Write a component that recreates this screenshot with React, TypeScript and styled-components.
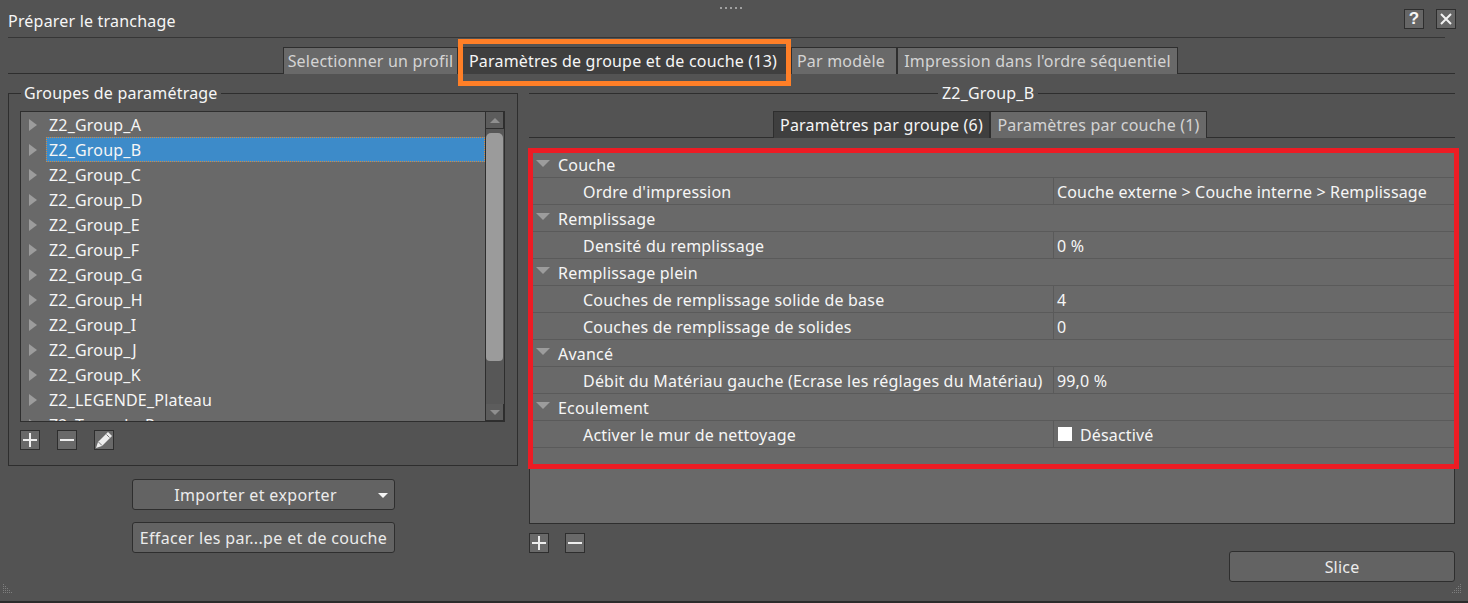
import type { FC } from 'react';
import styled, { createGlobalStyle } from 'styled-components';

const groups = [
	'Z2_Group_A',
	'Z2_Group_B',
	'Z2_Group_C',
	'Z2_Group_D',
	'Z2_Group_E',
	'Z2_Group_F',
	'Z2_Group_G',
	'Z2_Group_H',
	'Z2_Group_I',
	'Z2_Group_J',
	'Z2_Group_K',
	'Z2_LEGENDE_Plateau',
	'Z2_Tremple_P',
];

type Setting = { label: string; value?: string; checkbox?: boolean };

const settings: Setting[] = [
	{ label: 'Couche' },
	{ label: "Ordre d'impression", value: 'Couche externe > Couche interne > Remplissage' },
	{ label: 'Remplissage' },
	{ label: 'Densité du remplissage', value: '0 %' },
	{ label: 'Remplissage plein' },
	{ label: 'Couches de remplissage solide de base', value: '4' },
	{ label: 'Couches de remplissage de solides', value: '0' },
	{ label: 'Avancé' },
	{ label: 'Débit du Matériau gauche (Ecrase les réglages du Matériau)', value: '99,0 %' },
	{ label: 'Ecoulement' },
	{ label: 'Activer le mur de nettoyage', value: 'Désactivé', checkbox: true },
];

const PlusIcon: FC = () => (
	<svg width="14" height="14" viewBox="0 0 14 14">
		<path d="M0 7H14M7 0V14" stroke="#eee" strokeWidth="2" />
	</svg>
);

const MinusIcon: FC = () => (
	<svg width="14" height="14" viewBox="0 0 14 14">
		<path d="M0 7H14" stroke="#eee" strokeWidth="2" />
	</svg>
);

const PencilIcon: FC = () => (
	<svg width="18" height="18" viewBox="0 0 18 18">
		<path d="M13 1 17 5 7 15 1 17 3 11Z" fill="#eee" />
		<path d="M11.5 3.5 14.5 6.5" stroke="#777" strokeWidth="1" />
		<path d="M3.5 11 7 14.5" stroke="#777" strokeWidth="1" />
	</svg>
);

const CloseIcon: FC = () => (
	<svg width="14" height="14" viewBox="0 0 14 14">
		<path d="M2 2 12 12M12 2 2 12" stroke="#f2f2f2" strokeWidth="2" />
	</svg>
);

const HandleDots: FC = () => (
	<HandleBox width="22" height="2" viewBox="0 0 22 2">
		<path d="M0 0h2v2H0zM5 0h2v2H5zM10 0h2v2h-2zM15 0h2v2h-2zM20 0h2v2h-2z" fill="#a0a0a0" />
	</HandleBox>
);

const Grip: FC<{ flip?: boolean }> = ({ flip }) => (
	<GripBox width="12" height="12" viewBox="0 0 12 12" $flip={flip}>
		<path
			d="M10 1h1v1h-1zM8 3h1v1H8zM10 3h1v1h-1zM6 5h1v1H6zM8 5h1v1H8zM10 5h1v1h-1zM4 7h1v1H4zM6 7h1v1H6zM8 7h1v1H8zM10 7h1v1h-1zM2 9h1v1H2zM4 9h1v1H4zM6 9h1v1H6zM8 9h1v1H8zM10 9h1v1h-1z"
			fill="#7e7e7e"
		/>
	</GripBox>
);

const App: FC = () => {
	return (
		<Window>
			<GlobalStyle />
			<HandleDots />
			<TitleBar>
				<Title>Préparer le tranchage</Title>
				<TitleButtons>
					<TitleButton>?</TitleButton>
					<TitleButton>
						<CloseIcon />
					</TitleButton>
				</TitleButtons>
			</TitleBar>
			<TabBar>
				<Tab $w={175}>Selectionner un profil</Tab>
				<Tab $w={333} $pr={3} $active>
					Paramètres de groupe et de couche (13)
					<OrangeMark />
				</Tab>
				<Tab $w={106} $pr={6}>
					Par modèle
				</Tab>
				<Tab $w={281}>Impression dans l'ordre séquentiel</Tab>
			</TabBar>
			<Main>
				<LeftColumn>
					<GroupBox>
						<Legend>Groupes de paramétrage</Legend>
						<Tree>
							<TreeList>
								{groups.map((name) => (
									<TreeRow key={name}>
										<TreeArrow />
										<TreeLabel $selected={name === 'Z2_Group_B'}>{name}</TreeLabel>
									</TreeRow>
								))}
							</TreeList>
							<ScrollBar>
								<ScrollButton>
									<ArrowUp />
								</ScrollButton>
								<ScrollTrack>
									<ScrollThumb />
								</ScrollTrack>
								<ScrollButton>
									<ArrowDown />
								</ScrollButton>
							</ScrollBar>
						</Tree>
						<IconRow>
							<IconButton>
								<PlusIcon />
							</IconButton>
							<IconButton>
								<MinusIcon />
							</IconButton>
							<IconButton>
								<PencilIcon />
							</IconButton>
						</IconRow>
					</GroupBox>
					<ActionButton $menu>
						Importer et exporter
						<MenuArrow />
					</ActionButton>
					<ActionButton>Effacer les par...pe et de couche</ActionButton>
				</LeftColumn>
				<RightColumn>
					<GroupHeading>
						<HeadingLine $w={409} />
						<span>Z2_Group_B</span>
						<HeadingLine />
					</GroupHeading>
					<SubTabBar>
						<Tab $w={217} $active>
							Paramètres par groupe (6)
						</Tab>
						<Tab $w={217}>Paramètres par couche (1)</Tab>
					</SubTabBar>
					<Panel>
						{settings.map((item) =>
							item.value === undefined ? (
								<SectionRow key={item.label}>
									<SectionArrow />
									{item.label}
								</SectionRow>
							) : (
								<SettingRow key={item.label}>
									<SettingLabel>{item.label}</SettingLabel>
									<SettingValue>
										{item.checkbox && <CheckBox />}
										{item.value}
									</SettingValue>
								</SettingRow>
							),
						)}
						<RedMark />
					</Panel>
					<Footer>
						<FooterIcons>
							<IconButton>
								<PlusIcon />
							</IconButton>
							<IconButton>
								<MinusIcon />
							</IconButton>
						</FooterIcons>
						<SliceButton>Slice</SliceButton>
					</Footer>
				</RightColumn>
			</Main>
			<Grip flip />
			<Grip />
		</Window>
	);
};

export default App;

const GlobalStyle = createGlobalStyle`
	html, body {
		margin: 0;
		padding: 0;
		background: #535353;
		overflow: hidden;
	}
`;

const Window = styled.div`
	position: relative;
	box-sizing: border-box;
	display: flex;
	flex-direction: column;
	width: 1468px;
	height: 603px;
	overflow: hidden;
	background: #535353;
	border-bottom: 2px solid #2b2b2b;
	color: #f6f6f6;
	font-family: 'Noto Sans', 'Open Sans', sans-serif;
	font-size: 16px;
	letter-spacing: 0.2px;
	white-space: nowrap;
`;

const HandleBox = styled.svg`
	position: absolute;
	top: 7px;
	left: 720px;
`;

const TitleBar = styled.div`
	box-sizing: border-box;
	display: flex;
	justify-content: space-between;
	align-items: flex-start;
	height: 38px;
	margin-left: 8px;
	margin-right: 23px;
	padding-top: 9px;
	border-bottom: 1px solid #363636;
`;

const Title = styled.div`
	line-height: 24px;
`;

const TitleButtons = styled.div`
	display: flex;
	gap: 12px;
	margin-right: -11px;
`;

const TitleButton = styled.div`
	box-sizing: border-box;
	display: flex;
	align-items: center;
	justify-content: center;
	width: 20px;
	height: 20px;
	background: #666;
	border: 1px solid #2e2e2e;
	font-family: 'Liberation Sans', sans-serif;
	font-size: 17px;
	font-weight: 700;
`;

const TabBar = styled.div`
	box-sizing: border-box;
	display: flex;
	justify-content: center;
	height: 27px;
	margin: 9px 13px 0 8px;
	padding-right: 2px;
	border-bottom: 1px solid #2e2e2e;
`;

const Tab = styled.div<{ $w: number; $pr?: number; $active?: boolean }>`
	position: relative;
	box-sizing: border-box;
	display: flex;
	align-items: center;
	justify-content: center;
	width: ${({ $w }) => $w}px;
	height: 27px;
	padding-right: ${({ $pr }) => $pr ?? 0}px;
	background: ${({ $active }) => ($active ? '#3f3f3f' : '#696969')};
	border: 1px solid #2e2e2e;
	border-bottom: none;
	color: ${({ $active }) => ($active ? '#f6f6f6' : '#d4d4d4')};
	line-height: 24px;
`;

const OrangeMark = styled.div`
	position: absolute;
	top: -9px;
	left: -1px;
	right: -1px;
	bottom: -12px;
	border: 5px solid #ff7f27;
	box-sizing: border-box;
`;

const Main = styled.div`
	display: flex;
	gap: 11px;
	margin: 9px 13px 0 8px;
`;

const LeftColumn = styled.div`
	display: flex;
	flex-direction: column;
	align-items: center;
	width: 510px;
	flex: none;
`;

const GroupBox = styled.div`
	position: relative;
	box-sizing: border-box;
	width: 510px;
	height: 373px;
	margin-top: 10px;
	margin-bottom: 13px;
	padding: 17px 12px 0 11px;
	border: 1px solid #2e2e2e;
`;

const Legend = styled.div`
	position: absolute;
	top: -13px;
	left: 12px;
	padding: 0 3px;
	background: #535353;
	line-height: 24px;
`;

const Tree = styled.div`
	box-sizing: border-box;
	display: flex;
	height: 311px;
	background: #696969;
	border: 1px solid #2e2e2e;
	overflow: hidden;
`;

const TreeList = styled.div`
	flex: 1;
	min-width: 0;
`;

const TreeRow = styled.div`
	display: flex;
	align-items: center;
	height: 25px;
	padding-left: 8px;
`;

const TreeArrow = styled.div`
	width: 0;
	height: 0;
	border-left: 8px solid #9c9c9c;
	border-top: 6px solid transparent;
	border-bottom: 6px solid transparent;
	margin-right: 9px;
	flex: none;
`;

const TreeLabel = styled.div<{ $selected?: boolean }>`
	box-sizing: border-box;
	flex: 1;
	height: 25px;
	line-height: 26px;
	padding-left: 3px;
	background: ${({ $selected }) => ($selected ? '#3d8bc9' : 'transparent')};
	outline: ${({ $selected }) => ($selected ? '1px dotted #d98a3c' : 'none')};
	outline-offset: -1px;
`;

const ScrollBar = styled.div`
	display: flex;
	flex-direction: column;
	width: 18px;
	flex: none;
	background: #575757;
	border-left: 1px solid #2e2e2e;
`;

const ScrollButton = styled.div`
	box-sizing: border-box;
	display: flex;
	align-items: center;
	justify-content: center;
	height: 17px;
	flex: none;
	background: #5c5c5c;
	border: 1px solid #2e2e2e;
	border-top: none;
	border-left: none;
`;

const ArrowUp = styled.div`
	width: 0;
	height: 0;
	border-left: 5px solid transparent;
	border-right: 5px solid transparent;
	border-bottom: 5px solid #8f8f8f;
`;

const ArrowDown = styled(ArrowUp)`
	border-bottom: none;
	border-top: 5px solid #8f8f8f;
`;

const ScrollTrack = styled.div`
	flex: 1;
	padding-top: 4px;
`;

const ScrollThumb = styled.div`
	width: 17px;
	height: 228px;
	background: #9b9b9b;
	border-radius: 5px 5px 4px 4px;
`;

const IconRow = styled.div`
	display: flex;
	gap: 17px;
	margin-top: 8px;
`;

const IconButton = styled.div`
	box-sizing: border-box;
	display: flex;
	align-items: center;
	justify-content: center;
	width: 20px;
	height: 20px;
	background: #696969;
	border: 1px solid #2e2e2e;
`;

const ActionButton = styled.div<{ $menu?: boolean }>`
	position: relative;
	box-sizing: border-box;
	display: flex;
	align-items: center;
	justify-content: center;
	width: 263px;
	height: 31px;
	margin-left: 1px;
	margin-bottom: 12px;
	padding-right: ${({ $menu }) => ($menu ? 16 : 0)}px;
	background: #636363;
	border: 1px solid #2e2e2e;
	border-radius: 3px;
	color: #ececec;
	letter-spacing: 0.35px;
`;

const MenuArrow = styled.div`
	position: absolute;
	right: 6px;
	top: 13px;
	width: 0;
	height: 0;
	border-left: 5px solid transparent;
	border-right: 5px solid transparent;
	border-top: 5px solid #f4f4f4;
`;

const RightColumn = styled.div`
	display: flex;
	flex-direction: column;
	flex: 1;
	min-width: 0;
`;

const GroupHeading = styled.div`
	display: flex;
	align-items: center;
	gap: 4px;
	height: 20px;
	line-height: 20px;
`;

const HeadingLine = styled.div<{ $w?: number }>`
	flex: ${({ $w }) => ($w ? `0 0 ${$w}px` : '1')};
	height: 1px;
	background: #2e2e2e;
`;

const SubTabBar = styled.div`
	box-sizing: border-box;
	display: flex;
	justify-content: center;
	height: 27px;
	margin-top: 8px;
	padding-right: 4px;
	border-bottom: 1px solid #2e2e2e;
`;

const Panel = styled.div`
	position: relative;
	box-sizing: border-box;
	height: 372px;
	margin-top: 14px;
	background: #696969;
	border: 1px solid #2e2e2e;
	border-top: none;
`;

const SectionRow = styled.div`
	position: relative;
	box-sizing: border-box;
	display: flex;
	align-items: center;
	height: 27px;
	padding-left: 28px;
	padding-top: 2px;
	border-bottom: 1px solid #5a5a5a;
	line-height: 24px;

	&:first-child {
		height: 26px;
		padding-top: 1px;
	}
`;

const SectionArrow = styled.div`
	position: absolute;
	left: 6px;
	top: 8px;
	width: 0;
	height: 0;
	border-left: 7px solid transparent;
	border-right: 7px solid transparent;
	border-top: 7px solid #9c9c9c;
`;

const SettingRow = styled.div`
	box-sizing: border-box;
	display: flex;
	height: 27px;
	border-bottom: 1px solid #5a5a5a;
	line-height: 28px;
`;

const SettingLabel = styled.div`
	box-sizing: border-box;
	width: 524px;
	padding-left: 53px;
	flex: none;
	border-right: 1px solid #5a5a5a;
`;

const SettingValue = styled.div`
	display: flex;
	align-items: center;
	padding-left: 3px;
	padding-top: 1px;
	letter-spacing: 0.16px;
`;

const CheckBox = styled.div`
	width: 14px;
	height: 14px;
	background: #fff;
	margin: -1px 8px 0 1px;
`;

const RedMark = styled.div`
	position: absolute;
	top: -4px;
	left: -2px;
	right: -5px;
	height: 321px;
	box-sizing: border-box;
	border: 5px solid #ed1c24;
`;

const Footer = styled.div`
	display: flex;
	justify-content: space-between;
	align-items: flex-start;
	margin-top: 9px;
`;

const FooterIcons = styled.div`
	display: flex;
	gap: 16px;
`;

const SliceButton = styled.div`
	box-sizing: border-box;
	display: flex;
	align-items: center;
	justify-content: center;
	width: 226px;
	height: 31px;
	margin-top: 18px;
	background: #636363;
	border: 1px solid #2e2e2e;
	border-radius: 3px;
	color: #ececec;
`;

const GripBox = styled.svg<{ $flip?: boolean }>`
	position: absolute;
	bottom: 6px;
	${({ $flip }) => ($flip ? 'left: 2px; transform: scaleX(-1);' : 'right: 6px;')}
`;
